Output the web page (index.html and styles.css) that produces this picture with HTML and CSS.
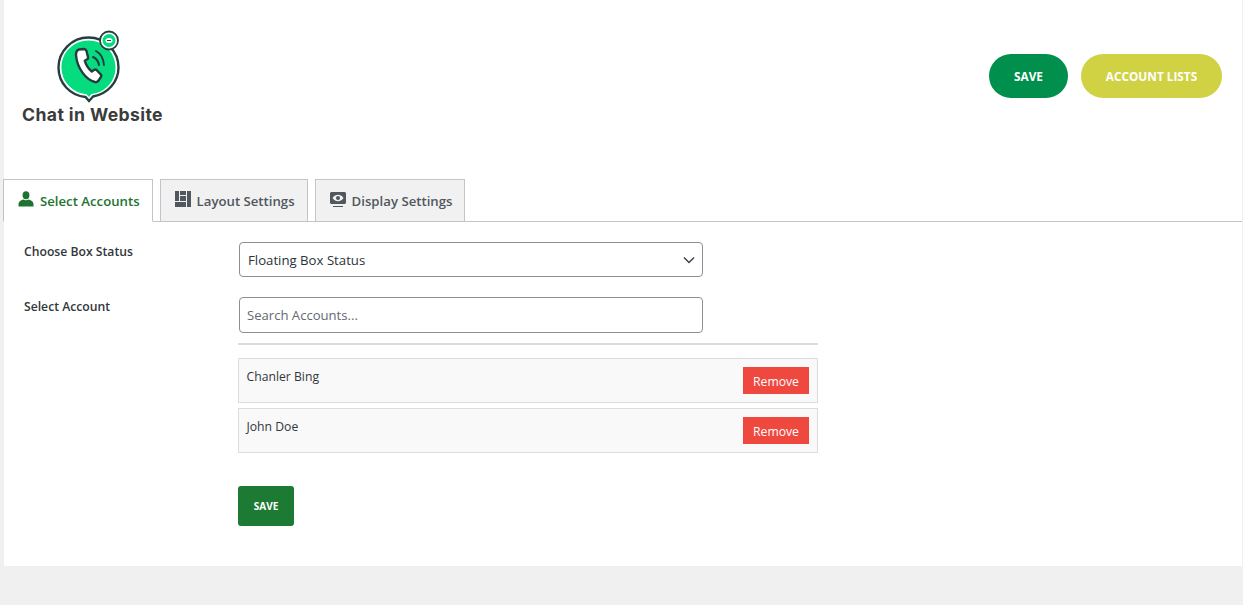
FILE: index.html
```html
<!DOCTYPE html>
<html lang="en">
<head>
<meta charset="utf-8">
<title>Chat in Website</title>
<link rel="stylesheet" href="styles.css">
</head>
<body>
<main class="panel">
  <header class="top">
    <div class="brand">
      <svg class="logo" viewBox="0 0 68 74" width="68" height="74" aria-hidden="true">
        <path d="M32.500 7.500C16 7.500 2.500 21 2.500 37.500c0 15.500 11.500 28 27 29.500l3.500 4 4-4.500C51.500 64 62.500 52 62.500 37.500 62.500 21 49 7.500 32.500 7.500z" fill="#fff" stroke="#263d3f" stroke-width="2.400"/>
        <path d="M32.500 10.500C17.500 10.500 5.500 22.500 5.500 37.500c0 14 11 25.500 25 26.700l2.500 2.800 2.500-3C49.500 62.500 59.500 51 59.500 37.500 59.500 22.500 47.500 10.500 32.500 10.500z" fill="#05dc7f"/>
        <path d="M23 19.500l5-.5c1.500 0 2 .5 2.500 2l1.500 6c.3 1.200-.2 2-1.200 2.500l-2 1.200c1 4 4 8.300 7 10.800l2.200-1.500c1-.6 2-.5 2.800.2l3.700 4c1 1 1 2 .3 3l-2.800 4c-1 1-2 1.200-3 .8C30 50 21 38 20 25c0-3 1-5 3-5.500z" fill="#fff" stroke="#263d3f" stroke-width="2.400" stroke-linejoin="round"/>
        <path d="M37 27c3 1.500 5.500 4.500 6 8M40 21c4.500 2.500 7.500 8 8 14" fill="none" stroke="#263d3f" stroke-width="2" stroke-linecap="round"/>
        <circle cx="53" cy="10.500" r="9" fill="#fff" stroke="#263d3f" stroke-width="1.800"/>
        <circle cx="53" cy="10.500" r="6.500" fill="#05dc7f"/>
        <ellipse cx="53" cy="10.500" rx="3.500" ry="2.500" fill="#fff"/>
        <path d="M51 10.500h4" stroke="#263d3f" stroke-width="1"/>
      </svg>
      <div class="brand-name">Chat in Website</div>
    </div>
    <div class="actions">
      <button class="pill pill-save">SAVE</button>
      <button class="pill pill-lists">ACCOUNT LISTS</button>
    </div>
  </header>

  <nav class="tabs">
    <a class="tab tab-active">
      <svg class="tab-icon" viewBox="0 0 16 16" width="16" height="16" aria-hidden="true"><ellipse cx="8" cy="4.200" rx="3.400" ry="4" fill="currentColor"/><path d="M.5 15.500v-2.500c0-2.200 2-3.500 4.700-4.400 1.500 1 4.100 1 5.600 0 2.700.9 4.700 2.200 4.700 4.400v2.500z" fill="currentColor"/></svg>
      Select Accounts
    </a>
    <a class="tab">
      <svg class="tab-icon" viewBox="0 0 16 16" width="16" height="16" aria-hidden="true"><path d="M0 0h4v10H0zM5 0h6v4H5zM5 5h6v5H5zM0 11h11v5H0zM12 0h4v16h-4z" fill="currentColor"/></svg>
      Layout Settings
    </a>
    <a class="tab">
      <svg class="tab-icon" viewBox="0 0 16 16" width="16" height="16" aria-hidden="true"><path d="M1.500 1h13c.8 0 1.500.7 1.500 1.500v9c0 .8-.7 1.500-1.500 1.500h-13C.7 13 0 12.300 0 11.500v-9C0 1.700.7 1 1.500 1zM3 15h10v1H3z" fill="currentColor"/><path d="M2.500 7C4 4.800 6 3.800 8 3.800s4 1 5.500 3.200C12 9.200 10 10.200 8 10.200S4 9.200 2.500 7z" fill="#f1f1f1"/><circle cx="8" cy="7" r="2" fill="currentColor"/></svg>
      Display Settings
    </a>
  </nav>

  <form class="form">
    <div class="field field-status">
      <label class="label">Choose Box Status</label>
      <div class="select">
        <span>Floating Box Status</span>
        <svg viewBox="0 0 12 8" width="12" height="8" aria-hidden="true"><path d="M1 1.500l5 5 5-5" fill="none" stroke="#3c434a" stroke-width="1.500"/></svg>
      </div>
    </div>
    <div class="field field-account">
      <label class="label">Select Account</label>
      <div class="account-col">
        <input class="search" type="text" placeholder="Search Accounts...">
        <hr class="rule">
        <ul class="accounts">
          <li class="account"><span class="account-name">Chanler Bing</span><span class="remove">Remove</span></li>
          <li class="account"><span class="account-name">John Doe</span><span class="remove">Remove</span></li>
        </ul>
        <button class="save" type="button">SAVE</button>
      </div>
    </div>
  </form>
</main>
</body>
</html>
```

FILE: styles.css
```css
* { box-sizing: border-box; }
html, body { margin: 0; padding: 0; }
body {
  background: #f0f0f0;
  font-family: "Open Sans", "Noto Sans", sans-serif;
  color: #32373c;
  height: 605px;
  overflow: hidden;
}
.panel {
  margin-left: 4px;
  width: 1238px;
  height: 566px;
  background: #fff;
}
.top {
  display: flex;
  justify-content: space-between;
  height: 179px;
  padding: 30px 20px 0 18px;
}
.brand { width: 142px; display: flex; flex-direction: column; }
.logo { display: block; margin-left: 34px; }
.brand-name {
  font-family: "Inter", "Liberation Sans", sans-serif;
  font-weight: 700;
  font-size: 17.6px;
  letter-spacing: 0.4px;
  line-height: 20px;
  color: #3b3b3b;
  white-space: nowrap;
  margin-top: 1px;
}
.actions { display: flex; gap: 13px; padding-top: 24px; }
.pill {
  border: 0;
  height: 44px;
  border-radius: 22px;
  color: #fff;
  font-family: inherit;
  font-weight: 700;
  font-size: 11.8px;
  padding: 0;
}
.pill-save { width: 79px; background: #008f4c; }
.pill-lists { width: 141px; background: #d0d244; }
.tabs {
  display: flex;
  gap: 7px;
  height: 43px;
  margin-left: -1px;
  border-bottom: 1px solid #c3c4c7;
}
.tab {
  display: flex;
  align-items: center;
  gap: 6px;
  height: 43px;
  padding: 0 12px 0 14px;
  border: 1px solid #c3c4c7;
  background: #f1f1f1;
  color: #50575e;
  font-weight: 600;
  font-size: 13.2px;
  white-space: nowrap;
}
.tab-active {
  background: #fff;
  border-bottom-color: #fff;
  color: #1d7431;
}
.tab-icon { flex: none; margin-top: -3px; }
.form { padding: 21px 0 0 20px; }
.field { display: flex; }
.label {
  width: 215px;
  flex: none;
  font-size: 12.2px;
  font-weight: 600;
  color: #32373c;
  line-height: 18px;
}
.field-status { height: 55px; margin-top: -1px; }
.field-status .label, .field-account .label { padding-top: 1px; }
.select {
  width: 464px;
  height: 35px;
  border: 1px solid #8c8f94;
  border-radius: 4px;
  padding: 0 7px 0 8px;
  display: flex;
  align-items: center;
  justify-content: space-between;
  font-size: 13.2px;
  color: #2c3338;
}
.account-col { width: 580px; margin-left: -1px; }
.search {
  display: block;
  width: 464px;
  height: 36px;
  margin-left: 1px;
  border: 1px solid #8c8f94;
  border-radius: 4px;
  padding: 0 7px;
  font: 13.1px "Open Sans", "Noto Sans", sans-serif;
  color: #2c3338;
}
.search::placeholder { color: #646970; opacity: 1; }
.rule {
  height: 2px;
  border: 0;
  background: #dcdcde;
  margin: 10px 0 13px;
}
.accounts { list-style: none; margin: 0; padding: 0; display: flex; flex-direction: column; gap: 5px; }
.account {
  height: 45px;
  border: 1px solid #dcdcde;
  background: #f9f9f9;
  display: flex;
  justify-content: space-between;
  padding: 8px 8px 0 7.5px;
  font-size: 12.2px;
  color: #32373c;
}
.account-name { line-height: 18px; padding-top: 1px; }
.remove {
  width: 66px;
  height: 27px;
  background: #ef483e;
  color: #fff;
  font-size: 12.2px;
  line-height: 29px;
  text-align: center;
}
.save {
  display: block;
  width: 56px;
  height: 40px;
  margin-top: 33px;
  padding: 0;
  border: 0;
  border-radius: 3px;
  background: #1c7a33;
  color: #fff;
  font-family: inherit;
  font-weight: 700;
  font-size: 10px;
}
```
